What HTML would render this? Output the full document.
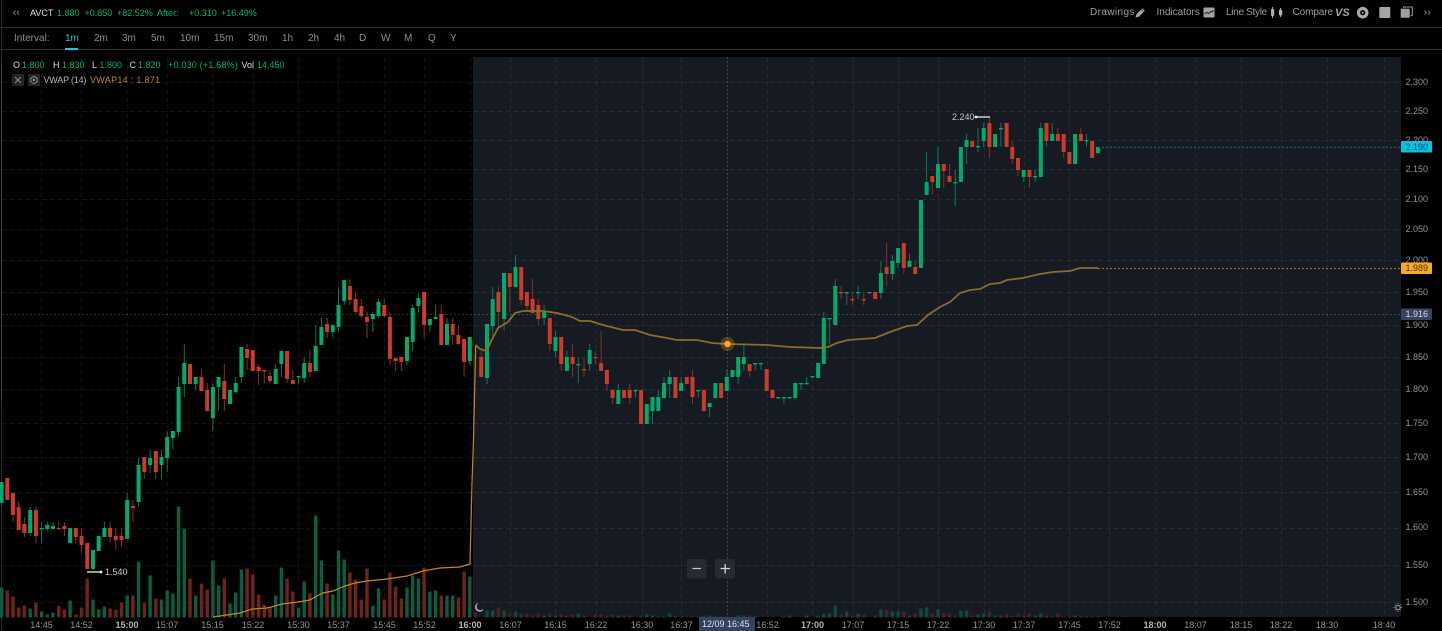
<!DOCTYPE html>
<html><head><meta charset="utf-8"><title>AVCT Chart</title>
<style>
html,body{margin:0;padding:0;background:#000;width:1442px;height:631px;overflow:hidden}
#r{position:relative;width:1442px;height:631px;background:#000;overflow:hidden;font-family:"Liberation Sans",Arial,sans-serif;font-size:9px;color:#999}
#r span{position:absolute;white-space:pre;line-height:14px}
.g{color:#00b573}.w{color:#dcdcdc}.h{font-size:10px;color:#9c9c9c}
.m{top:32px;font-size:10px;color:#8d8d8d}
.o{top:57.5px}.v{top:72.5px}.t{top:618px;transform:translateX(-50%);color:#949494}
.tb{font-weight:bold;color:#b5b5b5}.p{left:1405.5px;color:#949494}
svg{position:absolute;left:0;top:0}
</style></head><body><div id="r">
<svg width="1442" height="631" viewBox="0 0 1442 631" fill="none">
<rect x="473" y="57" width="928" height="560" fill="#161a22"/>
<rect x="1" y="0" width="1" height="631" fill="#2a2a2a"/>
<rect x="1" y="57" width="1" height="345" fill="#3d3d3d"/>
<rect x="0" y="27" width="1442" height="1" fill="#2f2f2f"/>
<rect x="0" y="49" width="1442" height="1" fill="#2f2f2f"/>
<rect x="65" y="48" width="13" height="2" fill="#1fc4e0"/>
<g id="grid" stroke="#ffffff" stroke-opacity=".07" stroke-dasharray="5 3" stroke-width="1"></g>
<path d="M727.5 57V617" stroke="#fff" stroke-opacity=".2" stroke-dasharray="2 2"/>
<path d="M2 314.5H1401" stroke="#fff" stroke-opacity=".18" stroke-dasharray="2 2"/>
<path id="vg" fill="#0b5c41"/><path id="vr" fill="#6e2418"/>
<path id="ag" fill="#10493b"/><path id="ar" fill="#472222"/>
<path id="wg" stroke="#0b7a53" stroke-width="1"/><path id="wr" stroke="#8a2f23" stroke-width="1"/>
<path id="bg" fill="#00ab6c"/><path id="br" fill="#cb3a2a"/>
<path d="M213 617L240 613L252 609L267 608L275 606L282 604L298 602L310 600L317 596L323 593L333 591L345 586L355 583L367 581L387 579L407 576L423 571L440 568L460 567L470 564L472 483L473.5 440L475.7 345" stroke="#c6861c" stroke-width="1.2"/>
<path d="M475.7 345L480 349L486.7 351L491.7 340L498 328L508 322L515 313L523 311L543 311L557 313L572 317L580 321L590 321L603 325L623 330L635 330L650 335L667 338L677 340L697 340L712 343L727 344L767 345L790 347L820 348L828 347L837 343L848 340L875 338L890 332L907 326L917 325L928 315L940 307L950 302L960 293L970 290L980 289L990 284L1000 283L1007 280L1023 278L1040 274L1053 272L1070 271L1080 268L1098 268" stroke="#8c6c2d" stroke-width="1.8"/>
<path d="M1098 268.5H1401" stroke="#8c6c2d" stroke-width="1.2" stroke-dasharray="2 2"/>
<path d="M1098 147.5H1401" stroke="#0c6474" stroke-width="1.2" stroke-dasharray="2 2"/>
<circle cx="727.5" cy="344" r="7" fill="#f5a623" fill-opacity=".28"/>
<circle cx="727.5" cy="344" r="3.2" fill="#f7ab2e"/>
<path d="M87 572H101" stroke="#ddd" stroke-width="1.4"/><circle cx="101" cy="572" r="1.4" fill="#eee"/>
<path d="M976 117H990" stroke="#ddd" stroke-width="1.4"/><circle cx="976" cy="117" r="1.4" fill="#eee"/>
<path d="M15.5 10.5L13.5 12.7L15.5 15M19 10.5L17 12.7L19 15" stroke="#7d7d7d" stroke-width=".9"/>
<path d="M1424.5 10.5L1426.5 12.7L1424.5 15M1428 10.5L1430 12.7L1428 15" stroke="#777" stroke-width=".9"/>
<path d="M1135.5 17.5l.9-3.2 6-6 2.4 2.4-6 6z" fill="#aaa"/>
<path d="M1141 9l2.2 2.2" stroke="#000" stroke-width=".6"/>
<rect x="1203.5" y="7.5" width="11" height="10" rx="1" fill="#a5a5a5"/>
<path d="M1204.5 14l2.2-1.6 2 1.2 2-2.2 1.4.6 1.3-2" stroke="#222" stroke-width="1"/>
<path d="M1272.5 7V18M1280.5 8V17" stroke="#a5a5a5" stroke-width="1"/>
<rect x="1271" y="9" width="3.2" height="7" rx="1" fill="#b0b0b0"/><rect x="1279" y="9.5" width="3.2" height="6" rx="1" fill="#b0b0b0"/>
<circle cx="1362.7" cy="12.7" r="4.2" stroke="#aaa" stroke-width="3.2"/><circle cx="1362.7" cy="12.7" r="1" fill="#aaa"/>
<rect x="1379.3" y="7" width="11" height="11" rx="1" fill="#a5a5a5"/>
<path d="M1403.5 8.2V7h8.8v8.6h-1.6" stroke="#999" stroke-width="1"/>
<rect x="1400.7" y="8.8" width="9" height="9" rx="1" fill="#a0a0a0"/>
<rect x="12" y="74" width="12" height="12" rx="1" fill="#252525"/>
<path d="M15 77l6 6M21 77l-6 6" stroke="#8a8a8a" stroke-width="1"/>
<rect x="28" y="74" width="12" height="12" rx="1" fill="#252525"/>
<circle cx="34" cy="80" r="3.4" stroke="#8a8a8a" stroke-width="1"/><circle cx="34" cy="80" r="1.2" fill="#8a8a8a"/>
<rect x="687" y="559" width="19.5" height="19.5" rx="2" fill="#262a31"/>
<rect x="715" y="559" width="20" height="19.5" rx="2" fill="#262a31"/>
<path d="M692.5 568.5H701" stroke="#c8c8c8" stroke-width="1.2"/>
<path d="M720.5 568.5H730M725.2 564V573.5" stroke="#d8d8d8" stroke-width="1.3"/>
<path d="M477.5 603.5a4.2 4.2 0 1 0 5.6 6 3.8 3.8 0 0 1-5.6-6z" stroke="#a8a8a8" stroke-width=".9"/>
<circle cx="1398" cy="607.5" r="2.2" stroke="#a8a8a8" stroke-width=".9"/>
<path d="M1398 603v1.2M1398 610.8v1.2M1393.6 607.5h1.2M1401 607.5h1.2M1395 604.5l.8.8M1400.2 609.7l.8.8M1401 604.5l-.8.8M1395.8 609.7l-.8.8" stroke="#a8a8a8" stroke-width=".7"/>
<rect x="1401" y="141" width="31" height="11.5" rx="1" fill="#00c4e8"/>
<rect x="1401" y="262.5" width="31" height="11.5" rx="1" fill="#f6ab23"/>
<rect x="1401" y="308.5" width="31" height="11.5" rx="1" fill="#37435f"/>
<rect x="699" y="617" width="56" height="14" fill="#34415e"/>
</svg>

<span style="left:30px;top:6px" class="w">AVCT</span>
<span style="left:57px;top:6px" class="g">1.880</span>
<span style="left:84.5px;top:6px" class="g">+0.850</span>
<span style="left:117px;top:6px" class="g">+82.52%</span>
<span style="left:157px;top:6px" class="g">After:</span>
<span style="left:189px;top:6px" class="g">+0.310</span>
<span style="left:221px;top:6px" class="g">+16.49%</span>

<span class="h" style="left:1090px;top:6px;letter-spacing:.4px">Drawings</span>
<span class="h" style="left:1156.5px;top:6px">Indicators</span>
<span class="h" style="left:1226px;top:6px;letter-spacing:-.3px">Line Style</span>
<span class="h" style="left:1292.5px;top:6px;letter-spacing:-.1px">Compare</span>
<span style="left:1335px;top:5.5px;font-size:11px;font-weight:bold;font-style:italic;color:#a5a5a5">VS</span>

<span class="m" style="left:14px">Interval:</span>
<span class="m" style="left:65px;color:#27c3dc">1m</span>
<span class="m" style="left:94px">2m</span>
<span class="m" style="left:122px">3m</span>
<span class="m" style="left:151px">5m</span>
<span class="m" style="left:180px">10m</span>
<span class="m" style="left:214px">15m</span>
<span class="m" style="left:248px">30m</span>
<span class="m" style="left:282px">1h</span>
<span class="m" style="left:308px">2h</span>
<span class="m" style="left:334px">4h</span>
<span class="m" style="left:359px">D</span>
<span class="m" style="left:381px">W</span>
<span class="m" style="left:404px">M</span>
<span class="m" style="left:428px">Q</span>
<span class="m" style="left:450px">Y</span>

<span class="o w" style="left:13px">O</span><span class="o g" style="left:22px">1.800</span>
<span class="o w" style="left:53px">H</span><span class="o g" style="left:62px">1.830</span>
<span class="o w" style="left:92px">L</span><span class="o g" style="left:99.5px">1.800</span>
<span class="o w" style="left:129.5px">C</span><span class="o g" style="left:138px">1.820</span>
<span class="o g" style="left:168px;letter-spacing:.2px">+0.030 (+1.68%)</span>
<span class="o w" style="left:241.5px">Vol</span><span class="o g" style="left:257px">14,450</span>
<span class="v" style="left:43.5px;color:#b5b5b5;letter-spacing:-.2px">VWAP (14)</span>
<span class="v" style="left:90px;color:#c8861c;letter-spacing:.3px">VWAP14 : 1.871</span>

<span class="p" style="top:75px">2.300</span>
<span class="p" style="top:104px">2.250</span>
<span class="p" style="top:133px">2.200</span>
<span class="p" style="top:162px">2.150</span>
<span class="p" style="top:192px">2.100</span>
<span class="p" style="top:222px">2.050</span>
<span class="p" style="top:253px">2.000</span>
<span class="p" style="top:285px">1.950</span>
<span class="p" style="top:318px">1.900</span>
<span class="p" style="top:350px">1.850</span>
<span class="p" style="top:382px">1.800</span>
<span class="p" style="top:416px">1.750</span>
<span class="p" style="top:450px">1.700</span>
<span class="p" style="top:485px">1.650</span>
<span class="p" style="top:520px">1.600</span>
<span class="p" style="top:558px">1.550</span>
<span class="p" style="top:595px">1.500</span>
<span style="left:1405.5px;top:139.5px;color:#16505e">2.190</span>
<span style="left:1405.5px;top:261px;color:#4a3406">1.989</span>
<span style="left:1405.5px;top:307px;color:#d8dce6">1.916</span>

<span style="left:105px;top:565px;color:#c8c8c8">1.540</span>
<span style="left:952px;top:110px;color:#c8c8c8">2.240</span>

<span class="t" style="left:41.5px">14:45</span>
<span class="t" style="left:81.5px">14:52</span>
<span class="t tb" style="left:127px">15:00</span>
<span class="t" style="left:167px">15:07</span>
<span class="t" style="left:212.5px">15:15</span>
<span class="t" style="left:253px">15:22</span>
<span class="t" style="left:298.5px">15:30</span>
<span class="t" style="left:338.5px">15:37</span>
<span class="t" style="left:384.5px">15:45</span>
<span class="t" style="left:424.5px">15:52</span>
<span class="t tb" style="left:470px">16:00</span>
<span class="t" style="left:510.5px">16:07</span>
<span class="t" style="left:555.5px">16:15</span>
<span class="t" style="left:596px">16:22</span>
<span class="t" style="left:642px">16:30</span>
<span class="t" style="left:681.5px">16:37</span>
<span class="t" style="left:767.5px">16:52</span>
<span class="t tb" style="left:812.5px">17:00</span>
<span class="t" style="left:853px">17:07</span>
<span class="t" style="left:898px">17:15</span>
<span class="t" style="left:938px">17:22</span>
<span class="t" style="left:984px">17:30</span>
<span class="t" style="left:1024px">17:37</span>
<span class="t" style="left:1069.5px">17:45</span>
<span class="t" style="left:1109.5px">17:52</span>
<span class="t tb" style="left:1155px">18:00</span>
<span class="t" style="left:1195.5px">18:07</span>
<span class="t" style="left:1241px">18:15</span>
<span class="t" style="left:1281px">18:22</span>
<span class="t" style="left:1327px">18:30</span>
<span class="t" style="left:1384px">18:40</span>
<span style="left:702px;top:617px;color:#dde1ea">12/09 16:45</span>
</div>
<script>
var C=[[1,482,503,482,505],[0,478,500],[0,493,515,493,522],[0,507,530,501,530],[0,524,533,517,537],[1,510,533,507,536],[0,510,536,507,543],[1,528,528,522,543],[1,525,529,522,531],[1,526,529,522,529],[0,528,528,522,529],[0,526,529,522,536],[1,528,543],[0,528,537,528,543],[0,536,545,528,553],[0,543,569],[1,550,569],[1,536,551],[1,528,537,522,537],[0,528,537,522,543],[0,536,540,528,550],[0,536,540,528,547],[1,500,539,493,539],[0,506,508,500,522],[1,465,502,458,507],[0,457,472,457,479],[1,458,465,450,473],[0,451,472,451,479],[1,457,465,450,479],[1,437,458,431,472],
[1,431,438,431,450],[1,387,432,377,437],[1,363,384,344,397],[0,364,384],[1,377,384,377,390],[0,377,391,369,391],[0,390,411,383,411],[1,387,418,383,431],[1,377,387,377,411],[0,381,399,364,411],[1,390,404],[1,383,392,377,394],[1,347,377,347,383],
[0,349,358,344,370],[0,350,371],[0,367,371,364,385],[0,370,371,370,383],[0,376,381,370,383],[1,369,384,364,384],[1,351,364,350,377],[0,351,379,351,383],[0,380,384,370,384],[1,376,376,376,384],[1,363,378,357,383],[0,363,372,350,377],[1,346,371,325,371],[1,327,345,318,345],[0,324,332,318,338],[1,325,332,325,338],[1,305,327,287,332],[1,280,301,280,305],[0,286,300,279,305],[0,299,312,292,313],[0,306,316,299,318],[0,317,322,312,338],[1,314,319,312,332],[1,302,316,299,318],[0,305,316,299,318],[0,317,359,312,365],[0,358,361,358,371],[0,357,362,357,371],[1,337,361,337,365],[1,308,342,305,351],[1,298,306,293,313],[0,292,325,292,338],[1,319,325,319,332],[1,317,319,305,319],[0,314,345,305,345],[1,324,345,318,345],[0,324,335,318,345],[0,335,344,325,345],[0,339,362,339,377],[1,337,361,337,365],
null,[0,357,377,351,377],[1,324,378,324,384],[1,299,326,287,337],[0,292,312,287,327],[1,273,319,273,331],[0,273,287,273,312],[1,267,287,255,287],[0,267,300,267,305],[0,292,306,292,312],[0,299,313,279,313],[0,305,319,299,325],[1,312,318,305,325],[0,318,344,318,351],[1,337,351,331,357],[0,337,364,337,371],[1,357,371,351,371],[0,357,364,344,377],[1,364,364,357,383],[0,369,369,357,377],[1,350,364,344,371],[0,357,358,351,364],[0,363,371,331,371],[0,370,384,370,391],[0,390,398,390,404],[1,390,404,384,404],[0,390,398],[0,390,398,384,404],[1,390,390,390,398],[0,390,424],[1,404,424],[1,397,411,397,424],[1,397,411,390,411],[1,383,398,377,398],[1,377,384,370,398],[0,377,398],[1,383,391,377,391],[0,377,384],[0,377,397,370,404],[1,390,390,390,398],[0,390,411],[1,403,407,403,417],
[1,383,398],[0,383,398],[1,377,391,370,391],[1,370,377],[1,357,377,357,384],[1,357,364,344,371],[0,364,371,364,377],[1,363,363,363,370],[1,363,363,363,370],[0,369,391],[0,390,398],[1,397,397],[1,397,397,397,404],[1,397,397],[1,383,398],[1,383,383,383,390],[1,383,383,377,384],[1,376,376],[1,363,378],[1,318,364,312,364],[1,318,318,318,344],[1,286,325,279,325],[0,292,292,286,299],[1,292,292,292,305],[0,299,299,292,305],[1,292,292,286,299],[0,299,299,292,305],[1,292,292],[0,292,299],[1,273,293,261,299],
[0,267,274,243,287],[1,261,274,255,280],[1,248,263,248,268],[0,243,268,243,274],[1,261,267,254,267],[0,267,274,261,274],[1,200,268],[1,182,195,152,195],[0,176,182,176,194],[1,164,188,147,188],[0,164,171,164,188],[0,176,182,164,182],[1,182,182,170,206],[1,147,182],[1,140,147,134,164],[0,141,147],[1,146,146,128,152],[1,128,141,123,147],[0,123,147,117,158],[1,134,147],[1,128,128,123,147],[0,123,147],[0,147,159,141,164],[0,158,170,158,176],[1,170,177,170,182],[0,170,177,170,188],[1,176,176,170,182],[1,128,177,123,177],[0,123,141,123,147],[1,134,141,123,141],[0,134,141,128,141],[0,134,152,134,158],[0,152,164],[1,134,164],[0,134,141,128,141],[1,140,140,134,147],[0,141,158],[1,147,153]];
var V=[30,-27,-21,-10,-12,9,-15,6,3,5,-12,-8,17,-3,-10,-39,18,8,11,-9,-8,-15,22,-22,56,-15,42,-19,18,27,24,111,89,-39,22,-34,-28,57,32,-39,14,25,48,-49,-43,-23,-13,-10,22,50,-39,-26,10,36,-24,102,57,-34,23,67,58,-45,-38,-18,-49,12,29,-18,-45,-31,-19,30,42,39,-50,26,27,-22,22,22,-20,-46,41,
-5,0,7,7,-10,7,-4,6,-4,-4,-2,-4,2,-4,2,-3,-2,-3,4,-2,0,-3,-3,-2,-3,2,-2,-2,0,-2,3,2,1,1,4,1,-1,-1,-1,-1,-2,2,1,-1,1,0,2,2,-2,1,0,0,0,0,1,2,0,0,2,0,2,4,4,12,-3,6,-2,4,-3,0,-2,8,-8,6,6,-6,2,-4,9,10,-4,8,-5,-4,-2,7,7,-2,3,4,-6,2,2,-3,-1,-4,2,-4,2,4,-2,1,-4,-1,-1,2,-2,1,-1,-1];
function X(i){return 1.6+5.71*i}
function F(n){return n.toFixed(1)}
var d={bg:'',br:'',wg:'',wr:'',vg:'',vr:'',ag:'',ar:''};
C.forEach(function(c,i){if(!c)return;var x=X(i),t=c[1],b=c[2],hi=c.length>3?c[3]:t,lo=c.length>3?c[4]:b,k=c[0]?'g':'r';
 if(hi<t)d['w'+k]+='M'+F(x)+' '+hi+'V'+t;
 if(lo>b)d['w'+k]+='M'+F(x)+' '+b+'V'+lo;
 var h=Math.max(b-t,1.4);
 d['b'+k]+='M'+F(x-2)+' '+t+'h4v'+h+'h-4z';});
V.forEach(function(v,i){if(!v)return;var k=(i>82?'a':'v')+(v>0?'g':'r'),h=Math.abs(v),x=X(i);
 d[k]+='M'+F(x-1.7)+' '+(617.5-h)+'h3.4v'+h+'h-3.4z';});
for(var k in d)document.getElementById(k).setAttribute('d',d[k]);
var g='',ys=[82,111,140,169,199,229,260,292.5,325,357,389.5,423,457,492,528,565,602],xs=[41.5,81.5,127,167,212.5,253,298.5,338.5,384.5,424.5,470,510.5,555.5,596,642,681.5,767.5,812.5,853,898,938,984,1024,1069.5,1109.5,1155,1195.5,1241,1281,1327,1384];
ys.forEach(function(y){g+='<line x1="2" x2="1401" y1="'+(Math.floor(y)+.5)+'" y2="'+(Math.floor(y)+.5)+'"/>'});
xs.forEach(function(x){var a=Math.floor(x)+.5;g+='<line x1="'+a+'" x2="'+a+'" y1="57" y2="617"/>'});
document.getElementById('grid').innerHTML=g;
</script>
</body></html>
